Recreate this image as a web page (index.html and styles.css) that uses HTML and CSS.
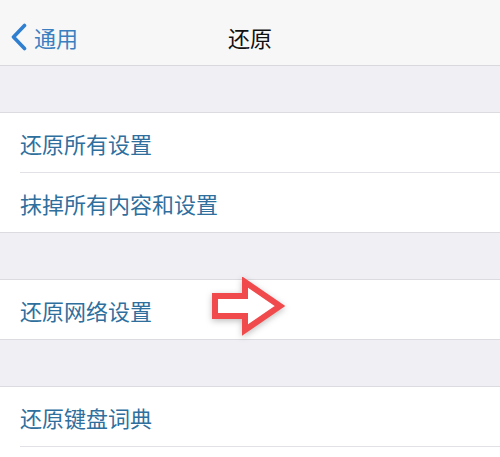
FILE: index.html
```html
<!DOCTYPE html>
<html>
  <head>
    <title>还原</title>
    <meta charset='utf-8'>
    <link rel="stylesheet" href="styles.css">
  </head>

  <body>
    <div class="nav">
      <div class="back">
        <svg class="chev" width="18" height="28" viewBox="0 0 18 28">
          <path d="M14.5 2.5 L3.5 14 L14.5 25.5" fill="none" stroke="#2f7fd0" stroke-width="3.6" stroke-linecap="round" stroke-linejoin="round"/>
        </svg>
        <span>通用</span>
      </div>
      <div class="title">还原</div>
    </div>

    <div class="gap"></div>
    <div class="group">
      <div class="row">还原所有设置</div>
      <div class="row">抹掉所有内容和设置</div>
    </div>

    <div class="gap"></div>
    <div class="group">
      <div class="row">还原网络设置</div>
    </div>

    <div class="gap"></div>
    <div class="group">
      <div class="row">还原键盘词典</div>
      <div class="row"></div>
    </div>

    <!-- 红色箭头 叠在截图上方 -->
    <svg class="arrow" width="90" height="70" viewBox="0 0 90 70">
      <polygon points="8,19 38,19 38,5 73,29 38,53 38,39 8,39" fill="#fff" stroke="#f04a4c" stroke-width="6" stroke-linejoin="miter"/>
    </svg>
  </body>
</html>
```

FILE: styles.css
```css
body {
  margin: 0;
  height: 457px;
  background: #efeff4;
  font-family: "Noto Sans CJK SC", "Noto Sans", sans-serif;
  overflow: hidden;
}

.nav {
  height: 65px;
  background: #f7f7f8;
  border-bottom: 1px solid #d9d9dd;
  display: flex;
  align-items: center;
  justify-content: center;
  position: relative;
}
.back {
  position: absolute;
  left: 10px;
  top: 0;
  height: 65px;
  display: flex;
  align-items: center;
  gap: 6px;
  color: #3a80c0;
  font-size: 22px;
  padding-top: 8px;
  box-sizing: border-box;
}
.title {
  font-size: 22px;
  color: #111;
  padding-top: 8px;
}

.gap {
  height: 46px;
  border-bottom: 1px solid #dcdce0;
}

.group {
  background: #fff;
  border-bottom: 1px solid #dcdce0;
}
.row {
  height: 59px;
  margin-left: 20px;
  display: flex;
  align-items: center;
  font-size: 22px;
  color: #2f6f9e;
  border-bottom: 1px solid #e2e2e6;
}
.row:last-child {
  border-bottom: none;
}

.arrow {
  position: absolute;
  left: 207px;
  top: 277px;
  filter: drop-shadow(0 2px 3px rgba(0, 0, 0, 0.25));
}
```
